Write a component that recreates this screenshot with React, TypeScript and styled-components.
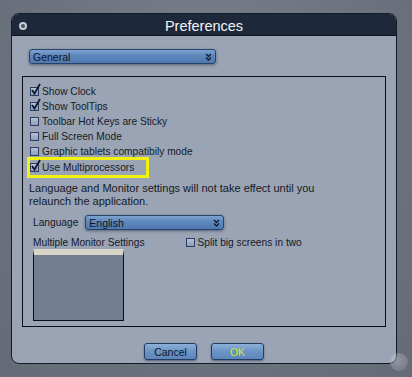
import styled, { createGlobalStyle } from "styled-components";

const GlobalStyle = createGlobalStyle`
  html, body {
    margin: 0;
    padding: 0;
    background: #6f7583;
    font-family: "Liberation Sans", Arial, sans-serif;
  }
`;

const checks = [
  { label: "Show Clock", on: true },
  { label: "Show ToolTips", on: true },
  { label: "Toolbar Hot Keys are Sticky", on: false },
  { label: "Full Screen Mode", on: false },
  { label: "Graphic tablets compatibily mode", on: false },
  { label: "Use Multiprocessors", on: true, highlight: true },
];

function Chevrons() {
  return (
    <svg width="7" height="8" viewBox="0 0 7 8">
      <path d="M1 1 L3.5 3.5 L6 1 M1 4.5 L3.5 7 L6 4.5" fill="none" stroke="#101a2c" strokeWidth="1.3" />
    </svg>
  );
}

function CheckBox({ on }: { on: boolean }) {
  return (
    <Box>
      {on && (
        <svg width="12" height="13" viewBox="0 0 12 13">
          <path d="M2 7 L4.5 10.5 L10 1" fill="none" stroke="#0f1830" strokeWidth="1.8" />
        </svg>
      )}
    </Box>
  );
}

export default function App() {
  return (
    <Page>
      <GlobalStyle />
      <Window>
        <TitleBar>
          <Dot />
          Preferences
        </TitleBar>
        <Body>
          <Select $width={187}>
            <span>General</span>
            <Chevrons />
          </Select>
          <Panel>
            <CheckList>
              {checks.map((c) => (
                <CheckRow key={c.label} $highlight={!!c.highlight}>
                  <CheckBox on={c.on} />
                  {c.label}
                </CheckRow>
              ))}
            </CheckList>
            <Note>
              Language and Monitor settings will not take effect until you
              <br />
              relaunch the application.
            </Note>
            <LangRow>
              Language
              <Select $width={139}>
                <span>English</span>
                <Chevrons />
              </Select>
            </LangRow>
            <MonitorRow>
              <MonitorCol>
                Multiple Monitor Settings
                <MonitorBox />
              </MonitorCol>
              <CheckRow $highlight={false}>
                <CheckBox on={false} />
                Split big screens in two
              </CheckRow>
            </MonitorRow>
          </Panel>
          <Buttons>
            <Button>Cancel</Button>
            <Button $primary>OK</Button>
          </Buttons>
        </Body>
        <Grip />
      </Window>
    </Page>
  );
}

const Page = styled.div`
  width: 412px;
  height: 377px;
  box-sizing: border-box;
  padding: 13px 0 0 11px;
  background: radial-gradient(ellipse at 50% 30%, #7a808c 0%, #6a707c 70%, #646a76 100%);
`;

const Window = styled.div`
  position: relative;
  width: 386px;
  height: 351px;
  box-sizing: border-box;
  border: 1px solid #141b28;
  border-radius: 8px;
  background: #9aa4b5;
  display: flex;
  flex-direction: column;
`;

const TitleBar = styled.div`
  position: relative;
  height: 22px;
  box-sizing: border-box;
  padding-top: 2px;
  background: #1e283b;
  border-bottom: 1px solid #0c1120;
  border-radius: 7px 7px 0 0;
  color: #f2f4f8;
  font-size: 14.5px;
  line-height: 20px;
  text-align: center;
`;

const Dot = styled.span`
  position: absolute;
  left: 7px;
  top: 8px;
  width: 4px;
  height: 4px;
  border-radius: 50%;
  border: 2px solid #c8ccd4;
  background: #4a5262;
`;

const Body = styled.div`
  flex: 1;
  display: flex;
  flex-direction: column;
  padding: 13px 10px 3px 10px;
`;

const Select = styled.div<{ $width: number }>`
  width: ${(p) => p.$width}px;
  height: 15px;
  box-sizing: border-box;
  margin-left: 7px;
  display: flex;
  align-items: flex-end;
  justify-content: space-between;
  padding: 0 3px 0 3px;
  border: 1px solid #27436c;
  border-radius: 3px;
  background: linear-gradient(#7fa3cf 0%, #5f88bd 40%, #4f79b0 100%);
  box-shadow: 0 1px 3px rgba(20, 30, 50, 0.5);
  color: #0e1626;
  font-size: 10.5px;
  line-height: 12px;
  svg {
    align-self: center;
  }
`;

const Panel = styled.div`
  margin-top: 12px;
  height: 251px;
  box-sizing: border-box;
  border: 1px solid #0a0e16;
  padding: 8px 6px 0 6px;
  color: #141a26;
  font-size: 11px;
`;

const CheckList = styled.div`
  display: flex;
  flex-direction: column;
  align-items: flex-start;
  font-size: 10.2px;
`;

const CheckRow = styled.div<{ $highlight: boolean }>`
  display: flex;
  align-items: center;
  gap: 3px;
  height: 15px;
  padding: ${(p) => (p.$highlight ? "0 12px 1px 0" : "0 0 2px 0")};
  box-sizing: border-box;
  outline: ${(p) => (p.$highlight ? "3px solid #f2f20a" : "none")};
  margin-left: 1px;
`;

const Box = styled.span`
  position: relative;
  width: 9px;
  height: 9px;
  box-sizing: border-box;
  border: 1px solid #2c3e66;
  background: linear-gradient(#b6c2d6, #8e9db6);
  svg {
    position: absolute;
    left: -1px;
    top: -5px;
  }
`;

const Note = styled.div`
  margin-top: 7px;
  line-height: 13px;
`;

const LangRow = styled.div`
  display: flex;
  align-items: center;
  margin-top: 7px;
  padding-left: 4px;
  font-size: 10.2px;
  ${Select} {
    margin-left: 7px;
  }
`;

const MonitorRow = styled.div`
  display: flex;
  align-items: flex-start;
  margin-top: 7px;
  padding-left: 4px;
  font-size: 10.2px;
  ${CheckRow} {
    margin-left: 41px;
    margin-top: -1px;
  }
`;

const MonitorCol = styled.div`
  display: flex;
  flex-direction: column;
  gap: 1px;
`;

const MonitorBox = styled.div`
  width: 91px;
  height: 72px;
  box-sizing: border-box;
  border: 1px solid #0a0e16;
  border-top: 6px solid #d8d4c8;
  background: #737d91;
`;

const Buttons = styled.div`
  flex: 1;
  display: flex;
  justify-content: center;
  align-items: flex-end;
  gap: 14px;
`;

const Button = styled.div<{ $primary?: boolean }>`
  width: 53px;
  height: 17px;
  box-sizing: border-box;
  border: 1px solid #223c62;
  border-radius: 3px;
  background: linear-gradient(#8db0d8 0%, #6d95c6 45%, #5c85ba 100%);
  box-shadow: 0 1px 2px rgba(20, 30, 50, 0.5);
  color: ${(p) => (p.$primary ? "#cfe53a" : "#0e1626")};
  font-size: 10.5px;
  line-height: 16px;
  text-align: center;
`;

const Grip = styled.span`
  position: absolute;
  right: -12px;
  bottom: -8px;
  width: 18px;
  height: 18px;
  border-radius: 50%;
  background: radial-gradient(circle at 40% 40%, rgba(230, 232, 236, 0.35), rgba(150, 155, 165, 0.2));
`;
